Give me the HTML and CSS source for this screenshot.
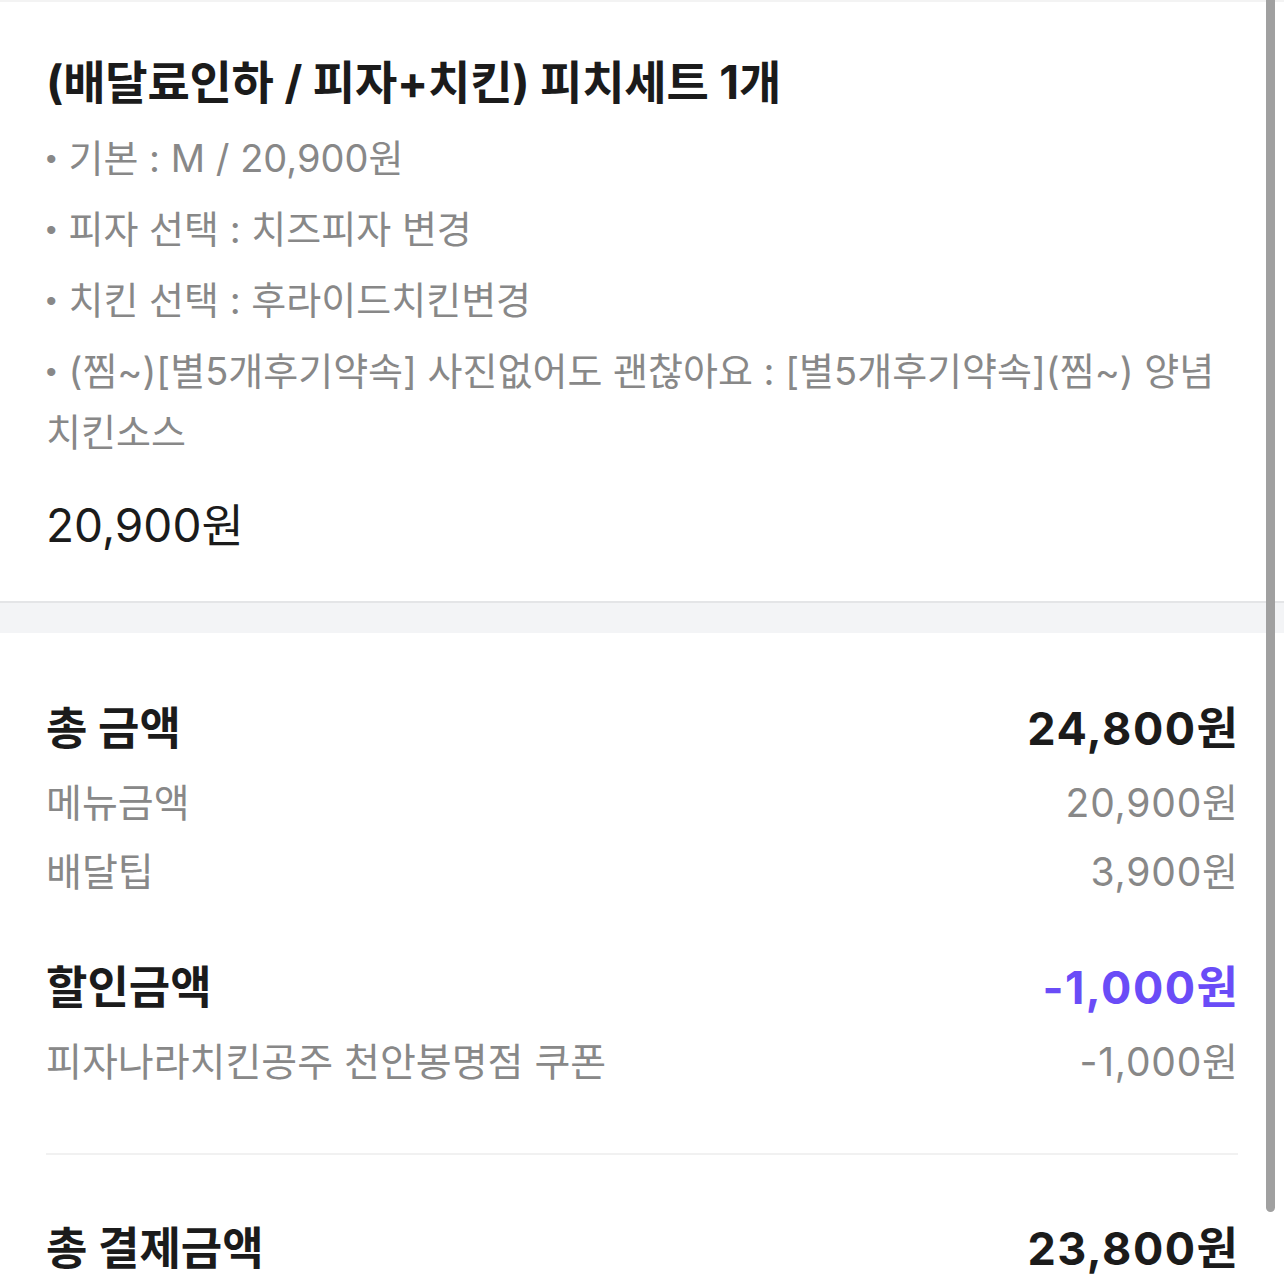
FILE: index.html
```html
<!DOCTYPE html>
<html lang="ko">
<head>
<meta charset="utf-8">
<title>주문 상세</title>
<link rel="stylesheet" href="styles.css">
</head>
<body>
<div class="page">
  <section class="order-item">
    <h1 class="item-title">(배달료인하 / 피자+치킨) 피치세트 1개</h1>
    <ul class="options">
      <li>기본 : M / 20,900원</li>
      <li>피자 선택 : 치즈피자 변경</li>
      <li>치킨 선택 : 후라이드치킨변경</li>
      <li>(찜~)[별5개후기약속] 사진없어도 괜찮아요 : [별5개후기약속](찜~) 양념치킨소스</li>
    </ul>
    <div class="item-price">20,900원</div>
  </section>
  <div class="band"></div>
  <section class="summary">
    <div class="row head">
      <span>총 금액</span><span class="num">24,800원</span>
    </div>
    <div class="row sub first">
      <span>메뉴금액</span><span class="num">20,900원</span>
    </div>
    <div class="row sub">
      <span>배달팁</span><span class="num">3,900원</span>
    </div>
    <div class="row head discount">
      <span>할인금액</span><span class="num accent">-1,000원</span>
    </div>
    <div class="row sub first">
      <span>피자나라치킨공주 천안봉명점 쿠폰</span><span class="num">-1,000원</span>
    </div>
    <hr class="divider">
    <div class="row head total">
      <span>총 결제금액</span><span class="num">23,800원</span>
    </div>
  </section>
</div>
<div class="scrollbar"></div>
</body>
</html>
```
FILE: styles.css
```css
html, body {
  margin: 0;
  padding: 0;
  background: #ffffff;
  overflow: hidden;
  height: 100%;
}
body {
  font-family: "Inter", "Noto Sans CJK KR", sans-serif;
  color: #1b1b1b;
}
.page {
  border-top: 2px solid #f3f3f3;
}
.order-item {
  padding: 50px 46px 46px;
}
.item-title {
  margin: 0;
  font-size: 46px;
  font-weight: 700;
  line-height: 60px;
  letter-spacing: -0.2px;
}
.options {
  list-style: none;
  margin: 16px 0 0;
  padding: 0;
  display: flex;
  flex-direction: column;
  gap: 10px;
  color: #888888;
  font-size: 38px;
  line-height: 61px;
}
.options li::before {
  content: "•";
  font-family: "Liberation Sans", sans-serif;
  font-size: 30px;
  margin-right: 12px;
  vertical-align: 3px;
}
.item-price {
  margin-top: 32px;
  font-size: 46px;
  line-height: 60px;
}
.band {
  height: 30px;
  background: #f3f4f6;
  border-top: 2px solid #e4e5e7;
}
.summary {
  padding: 66px 46px 0;
  display: flex;
  flex-direction: column;
}
.row {
  display: flex;
  justify-content: space-between;
  align-items: center;
}
.row.head {
  font-size: 45px;
  font-weight: 700;
  line-height: 60px;
}
.row.head .num {
  letter-spacing: 1.5px;
  margin-right: -1.5px;
}
.row.sub {
  font-size: 39px;
  line-height: 58px;
  color: #888888;
  margin-top: 11px;
}
.row.sub.first {
  margin-top: 15px;
}
.row.sub .num {
  letter-spacing: 0.8px;
  margin-right: -0.8px;
}
.row.discount {
  margin-top: 57px;
}
.accent {
  color: #6a4cf7;
}
.divider {
  border: 0;
  height: 2px;
  background: #f1f1f1;
  margin: 62px 0 0;
}
.row.total {
  margin-top: 64px;
}
.scrollbar {
  position: fixed;
  top: 0;
  right: 9px;
  width: 9px;
  height: 1212px;
  background: #a0a0a0;
  border-radius: 0 0 5px 5px;
}
```
